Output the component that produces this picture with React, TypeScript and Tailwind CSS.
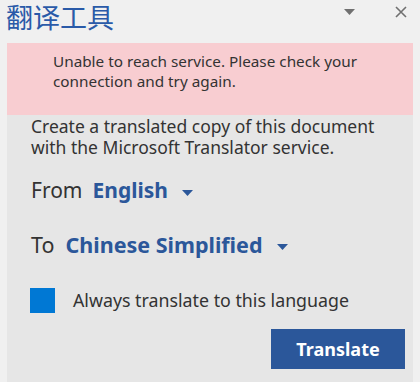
import React from 'react';

const font = { fontFamily: '"Segoe UI", "Noto Sans", "Noto Sans CJK SC", sans-serif' };

function Caret({ className }: { className?: string }) {
    return (
        <svg width="11" height="6" viewBox="0 0 11 6" className={className}>
            <path d="M0 0 H11 L5.5 6 Z" fill="currentColor" />
        </svg>
    );
}

export default function App() {
    return (
        <div className="w-[420px] h-[382px] bg-[#f0f0f0] overflow-hidden flex flex-col" style={font}>
            {/* Header */}
            <div className="h-[43px] shrink-0 flex items-start">
                <div className="pl-[6px] text-[27px] leading-[34px] text-[#2a5aa8] font-['Noto_Sans_CJK_SC',sans-serif]">
                    翻译工具
                </div>
                <div className="ml-auto flex items-start pt-[6px] pr-[13px] text-[#707070]">
                    <Caret className="mt-[3px] mr-[40px]" />
                    <svg width="12" height="12" viewBox="0 0 12 12">
                        <path d="M1 1 L11 11 M11 1 L1 11" stroke="currentColor" strokeWidth="1.6" />
                    </svg>
                </div>
            </div>

            {/* Panel */}
            <div className="mx-[7px] flex-1 bg-[#e6e6e6] flex flex-col">
                <div className="h-[72px] shrink-0 bg-[#f8cdd1] pl-[46px] pr-[30px] pt-[8px] text-[15.3px] leading-[20px] text-[#333]">
                    Unable to reach service. Please check your connection and try again.
                </div>

                <div className="px-[24px] pt-[1px] text-[17.5px] leading-[21px] text-[#333]">
                    Create a translated copy of this document with the Microsoft Translator service.
                </div>

                <div className="px-[24px] mt-[18px] flex items-center h-[30px] text-[21px]">
                    <span className="text-[#333]">From</span>
                    <span className="ml-[10px] font-bold text-[#2b579a]">English</span>
                    <Caret className="ml-[14px] mt-[3px] text-[#2b579a]" />
                </div>

                <div className="px-[24px] mt-[24px] flex items-center h-[30px] text-[21.5px]">
                    <span className="text-[#333]">To</span>
                    <span className="ml-[11px] font-bold text-[#2b579a]">Chinese Simplified</span>
                    <Caret className="ml-[14px] mt-[3px] text-[#2b579a]" />
                </div>

                <div className="pl-[23px] mt-[28px] flex items-center h-[25px] shrink-0">
                    <div className="w-[25px] h-[25px] bg-[#0078d4]" />
                    <span className="ml-[18px] text-[17.8px] text-[#333]">Always translate to this language</span>
                </div>

                <div className="flex justify-end pr-[8px] mt-[16px] shrink-0">
                    <button className="w-[134px] h-[40px] bg-[#2b579a] text-white font-bold text-[18px]">
                        Translate
                    </button>
                </div>
            </div>
        </div>
    );
}
